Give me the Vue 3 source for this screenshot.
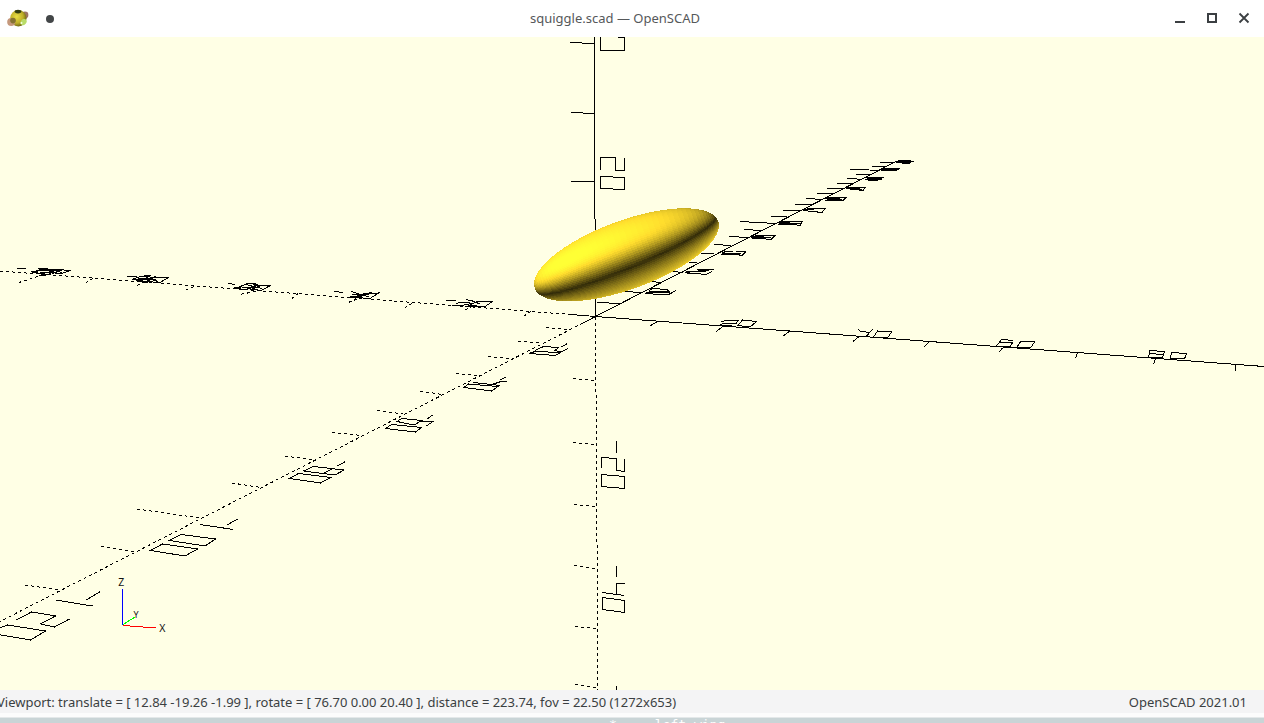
<script setup>
const A = 97.7, B = 34.3, C = 63
const TILT = (-20.1 * Math.PI) / 180
const LIGHT = [-0.344, 0.741, 0.577]
const BASE = [249, 215, 44]

function surface(theta, phi) {
  return [-Math.cos(theta), Math.sin(theta) * Math.cos(phi), Math.sin(theta) * Math.sin(phi)]
}
function project(s) {
  const u = s[0] * A, v = -s[1] * B
  const x = 626.5 + u * Math.cos(TILT) - v * Math.sin(TILT)
  const y = 254.8 + u * Math.sin(TILT) + v * Math.cos(TILT)
  return x.toFixed(2) + ',' + y.toFixed(2)
}
function shade(s) {
  const n = [s[0] / A, s[1] / B, s[2] / C]
  const len = Math.hypot(...n)
  const d = Math.abs(n[0] * LIGHT[0] + n[1] * LIGHT[1] + n[2] * LIGHT[2]) / len
  return 'rgb(' + BASE.map(c => Math.min(255, Math.round(c * (0.2 + d)))).join(',') + ')'
}
const facets = []
const ROWS = 50, COLS = 50
for (let i = 0; i < COLS; i++) {
  for (let j = 0; j < ROWS; j++) {
    const t0 = (i * Math.PI) / COLS, t1 = ((i + 1) * Math.PI) / COLS
    const p0 = (j * Math.PI) / ROWS, p1 = ((j + 1) * Math.PI) / ROWS
    facets.push({
      points: [surface(t0, p0), surface(t1, p0), surface(t1, p1), surface(t0, p1)].map(project).join(' '),
      fill: shade(surface((t0 + t1) / 2, (p0 + p1) / 2))
    })
  }
}
</script>

<template>
  <div class="window">
    <header class="titlebar">
      <div class="left">
        <svg class="logo" width="24" height="20" viewBox="0 0 24 20">
          <defs>
            <radialGradient id="ball" cx=".4" cy=".4" r=".65">
              <stop offset="0" stop-color="#e9df43" /><stop offset=".6" stop-color="#c0b02a" /><stop offset="1" stop-color="#625c10" />
            </radialGradient>
          </defs>
          <circle cx="19" cy="7" r="3.4" fill="#9c7565" />
          <circle cx="12.3" cy="10.3" r="8.2" fill="url(#ball)" />
          <ellipse cx="12" cy="3.6" rx="3.4" ry="1.8" fill="#323d12" />
          <circle cx="5.2" cy="14" r="4" fill="#c5987c" />
          <circle cx="7" cy="12.6" r="2.8" fill="#857332" />
          <ellipse cx="17.6" cy="14" rx="2.8" ry="3.4" transform="rotate(35 17.6 14)" fill="#b9dc69" />
          <circle cx="15.5" cy="15" r="1" fill="#f4ffe0" />
        </svg>
        <span class="dot"></span>
      </div>
      <div class="title">squiggle.scad — OpenSCAD</div>
      <svg class="controls" width="90" height="37" viewBox="1174 0 90 37">
        <path d="M1175 22h10" stroke="#3b3f42" stroke-width="2" />
        <rect x="1208" y="14" width="8" height="8" fill="none" stroke="#3b3f42" stroke-width="2" />
        <path d="M1239.5 13.5l9 9m0-9l-9 9" stroke="#3b3f42" stroke-width="1.8" />
      </svg>
    </header>

    <svg class="view" width="1264" height="653" viewBox="0 37 1264 653">
      <g class="ink">
        <!-- solid axes -->
        <path d="M594.5 36V120L595.5 316M571 314.5L595.5 316.5L1264 366.5M583 323L595.5 316.5L897 161" />
        <!-- negative axes -->
        <path class="dash" d="M571 314.5L0 271M583 323L0 621.5M595.5 317L598 690" />
        <!-- vertical ticks and numbers -->
        <path d="M570 42.5L594 43.5M571 112.5L594 113.5M571 181.5L594 182" />
        <path d="M600.5 36V50.5H624.5V37.5H618M600.5 170V157.5H615.5V170.5H624.5V158M600.5 176.5L624.5 177.5V189.5L600.5 188.5Z" />
        <path class="dash" d="M573 378.5L594 380.5M573 442.5L595 444.5M574 504.5L595 506.5M574 565.5L595 568.5M575 626.5L596 628.5M575 684.5L597 688" />
        <path d="M616.5 441V453M601.5 468V457.5L616.5 458.5V470.5L624.5 471.5V459M601.5 474.5L624.5 476.5V488.5L601.5 486.5ZM616.5 566V577M624.5 583.5H616.5V594M602 592.5L624.5 595.5M602.5 597.5L624.5 600.5V612.5L602.5 609.5ZM616.5 686V690" />
        <!-- right axis -->
        <path d="M658 321L650 326M723 326.5L716 331.5M790 331L783 336M859 336.5L853 341.5M929 342L924 347M1002.5 348L999.5 352M1077.5 353L1075.5 358M1155.5 359L1153.5 364M1236 365L1235 371" />
        <path d="M721 322L727 320L738.5 320.5L736 323.5H723L719.5 325.5H732M742.5 320L756.5 321.5L750 327L738 325.5ZM858 329.5L861 331.5L870 332.5M872.5 329.5L866 336.5M877.5 331L891.5 332L887.5 338L873.5 337ZM1013.5 340.5L1001.5 339.5L996.5 346L1010 347L1012.5 342.5L999.5 342M1021 341L1034.5 342L1030.5 348L1017 347ZM1150 350.5L1164.5 351.5L1162.5 358L1148.5 357ZM1149 353.5L1163.5 354.5M1171.5 352.5L1186.5 353.5L1184.5 359L1170.5 358.5Z" />
        <!-- left axis -->
        <path class="dash" d="M531 311.5L524 316M412 303.5L405 307.5M298 293.5L292 298.5M194 286.5L186 290M93 278.5L86 282.5M262 290.5L239 294.5M145 281.5L135 286.5M357 299L347 303M473 306L463 311M38 276.5L19 282.5" />
        <path d="M446 300.5H456M466 299.5L474 301.5M452 305.5H464M456 303.5L460 302.5H470M462 305.5L476 302.5M465 306H480M477 301.5H492.5L485 306.5L469 305.5ZM470 300L480 304" />
        <path d="M334 291.5L343.5 292.5M351 291.5L369 297M349 298L367 293.5M352 294.5H369M360 296.5L372 292M364 293.5L378.5 293L370 298.5L355 297.5ZM350 296.5H362" />
        <path d="M228 283.5L235 284.5M234 287.5H241M235 288.5L248 283.5L257 284.5L246 290L236 288M246 284.5L262 288.5M242 287.5H260M250 290L262 285M255 285.5L270.5 285.5L261 290.5L247 288.5ZM246 283.5H256" />
        <path d="M127 276.5H137M152 277.5H168.5L160 282.5L146 281.5ZM142 276L154 277.5L146 281.5L132 279.5ZM135 279.5H150M138 278.5L156 279.5M144 275.5H151M139 281.5H150M146 277.5L158 281.5M156 276L146 283" />
        <path d="M17 268.5H26M31 271.5H38M32 272.5L44 268.5M38 268.5H48M41 269L56 269.5L48 274.5L34 272.5ZM36 270.5H60M40 272.5H55M50 269.5L62 272.5M57 269.5L70.5 270.5L62 273.5L48 272.5ZM52 274L64 269M39 275.5H46" />
        <!-- near axis -->
        <path class="dash" d="M546 327.5L567 329.5M518 341.5L542 342.5M488 356.5L513 359M456 373.5L477 375.5M420 391L442 394.5M377 410.5L403 414M332 432.5L362 435.5M285 456L314 460M232 483L261 487.5M137 509L200 518M101 546.5L134 552M25 585L61 590" />
        <path d="M535 351.5L561 352.5L555 355.5L529 353.5ZM535 350.5L543.5 346.5L558.5 347.5L555 350.5L561 352L568 348.5M561.5 347L567.5 343.5M468.5 384L498 386.5L491.5 391L464 387.5ZM473 382.5L500 385.5M492 384.5L501 381.5H507M500.5 380L506 377M391.5 424.5L421.5 427.5L415.5 432L385.5 428.5ZM401.5 418.5L422 420.5L414 425L397 421.5ZM421 421H433.5L426.5 426M427 419L433.5 414.5M298.5 473.5L330.5 477.5L320.5 483L289.5 478.5ZM313.5 466.5L344 470L335 475L303.5 471ZM331.5 469L323.5 473.5M337.5 466L345.5 461.5M200 524.5L233.5 529.5M227 525L237.5 519M181 534.5L215.5 539L205 546L169.5 540.5ZM162.5 544L197.5 549L185 556L150.5 550.5ZM55.5 600L92.5 606M86 600L100.5 591.5M16.5 620L31.5 612L55.5 616L40.5 624L54.5 627L69.5 619M-2 628.5L7.5 625L45.5 631L30.5 640L-2 634.5" />
        <!-- far axis -->
        <path d="M597 302.5L620 303.5M624 291.5L641 292.5M651 281.5L661 282.5M672 271.5L683 272.5M689 262.5L697 263M701 253.5H714M714 244.5L731 245.5M729 236.5L748 237.5M744 229.5L762 230.5M740 221.5L776 223.5M771 216.5H787M783 210.5H802M795 204.5H813M806 198.5L823 199.5M817 193.5H834M827 188.5H844M837 183.5H853M847 178L862 179.5M856 174.5H872M850 169L879 170.5M872 166.5H887M880 162.5H895" />
        <path d="M646 292.5H668L672 294M645 293.5L650 291.5H668M652 288.5L667 289.5L670 292.5M652 288.5L649 291M646 293.5L668 295L676 290.5M686 271.5H706M685 272.5L706 274.5L712 271.5M697 269.5H714M698 270.5H709M687 273.5H700M722 252.5L742 255.5L746 251.5M722 253.5H741M721 254.5H740M724 251.5H733M736 251.5H745M751 237.5L771 239.5L775 235.5L757 235.5ZM756 237.5H771M752 238.5H765M754 236.5H764M779 222.5L800 225.5L802 221.5H782ZM779 223.5H800M778 224.5H791M784 221.5H796M781 222.5H790M803 210.5L822 212.5L825 208.5H808ZM808 211.5H818M804 209.5H814M825 198.5L843 200.5L846 197.5H829ZM827 199.5H842M825 200.5H841M830 198.5H840M846 188.5L863 190.5L865 187.5H849ZM847 188.5H860M851 187.5H858M853 189.5H862M866 177.5H884M867 178.5H882M865 179.5H882M868 180.5H878M884 168.5H900M882 169.5H899M881 170.5H897M898 160.5H911M897 161.5H914M896 162.5H911M902 163.5H910" />
      </g>
      <g class="solid">
        <polygon v-for="(f, i) in facets" :key="i" :points="f.points" :fill="f.fill" />
      </g>
      <g class="gizmo">
        <path d="M123 625.5L156 628" stroke="#f00" />
        <path d="M123 624.5L135 617" stroke="#0f0" />
        <path d="M122.5 589V624.5" stroke="#00f" />
        <text x="118.3" y="586">Z</text>
        <text x="133.5" y="618" class="small">Y</text>
        <text x="159.3" y="632">X</text>
      </g>
    </svg>

    <footer class="status">
      <span class="port">Viewport: translate = [ 12.84 -19.26 -1.99 ], rotate = [ 76.70 0.00 20.40 ], distance = 223.74, fov = 22.50 (1272x653)</span>
      <span>OpenSCAD 2021.01</span>
    </footer>
    <div class="behind"><span class="mark">*</span><span>left_wing</span></div>
  </div>
</template>

<style>
body { background: #fff; overflow: hidden; }
</style>
<style scoped>
.window { width: 1264px; height: 723px; display: flex; flex-direction: column; overflow: hidden; font: 13px "Noto Sans", sans-serif; color: #3b3f42; }
.titlebar { height: 37px; flex: none; display: grid; grid-template-columns: 530px 1fr 90px; align-items: center; background: #fff; }
.left { display: flex; align-items: center; gap: 16px; padding-left: 6px; }
.logo { display: block; margin-top: -2px; }
.dot { width: 8px; height: 8px; border-radius: 50%; background: #434648; }
.title { color: #55585a; line-height: 37px; white-space: nowrap; }
.view { display: block; flex: none; background: #ffffe5; }
.ink { fill: none; stroke: #000; stroke-width: 1; shape-rendering: crispEdges; }
.dash { stroke-dasharray: 3 3; }
.solid { shape-rendering: crispEdges; }
.gizmo { fill: none; stroke-width: 1; shape-rendering: crispEdges; }
.gizmo text { fill: #111; font: 10.5px "Noto Sans", sans-serif; }
.gizmo .small { font-size: 9px; }
.status { height: 23px; flex: none; display: flex; justify-content: space-between; padding-right: 17px; line-height: 25px; background: #f4f4f5; border-bottom: 4px solid #fcfcfc; white-space: nowrap; }
.port { margin-left: -3px; letter-spacing: -0.012px; }
.behind { height: 5px; flex: none; overflow: hidden; background: #c9d4d6; border-top: 1px solid #e4e8e9; color: #fff; font: 13px/13px "DejaVu Sans Mono", monospace; display: flex; gap: 38px; padding-left: 609px; }
</style>
